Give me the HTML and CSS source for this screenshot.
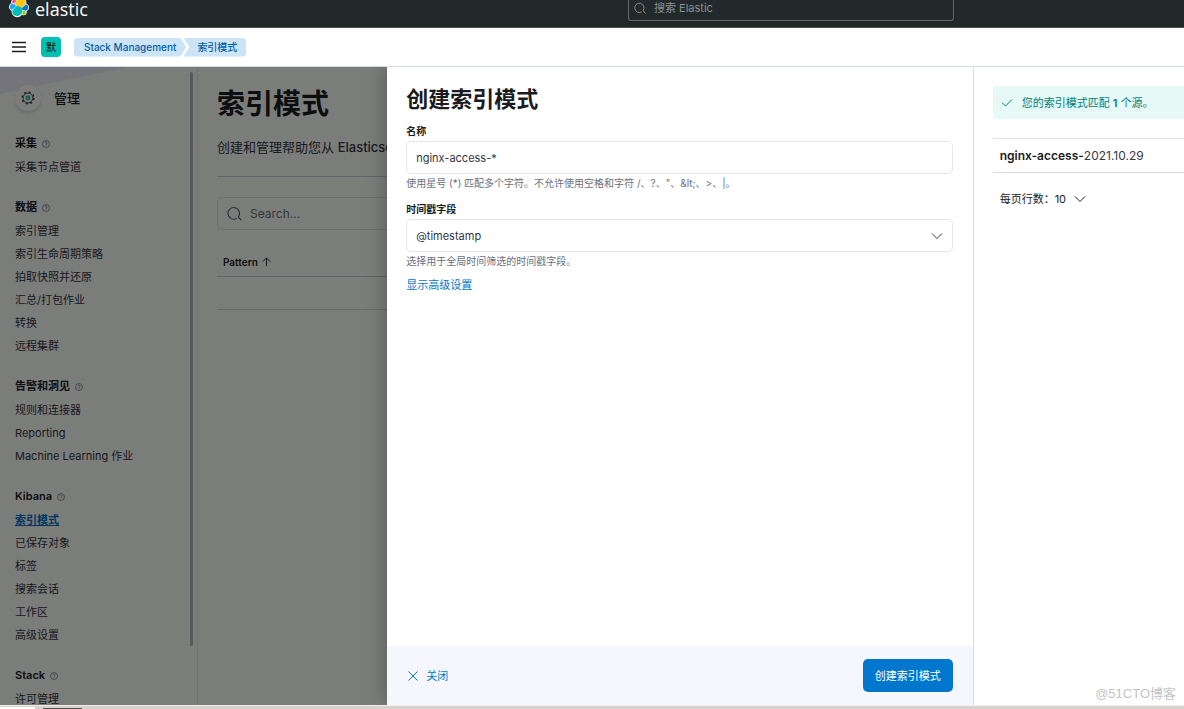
FILE: index.html
```html
<!DOCTYPE html>
<html lang="zh-CN">
<head>
<meta charset="utf-8">
<title>索引模式 - Elastic</title>
<link rel="stylesheet" href="styles.css">
</head>
<body>
<svg class="defs" aria-hidden="true">
  <symbol id="help" viewBox="0 0 16 16"><circle cx="8" cy="8" r="7" fill="none" stroke="currentColor" stroke-width="1.4"/><path d="M5.8 6.3c0-3 4.4-2.9 4.4-.2 0 1.700-2.200 1.600-2.200 3.400M8 11v1.500" fill="none" stroke="currentColor" stroke-width="1.400"/></symbol>
  <symbol id="search" viewBox="0 0 16 16"><path d="M10.300 13.200A6.200 6.200 0 1 1 12.100 11.600L15.300 15.300" fill="none" stroke="currentColor" stroke-width="1.100"/></symbol>
  <symbol id="chevron" viewBox="0 0 12 12"><path d="M1 3.500 6 8.500 11 3.500" fill="none" stroke="currentColor"/></symbol>
</svg>
<header class="topbar">
  <a class="brand" href="#">
    <svg class="brand-logo" viewBox="0 6 32 26">
      <path fill="#fff" d="M32 16.800c0-2.700-1.700-5-4.200-6C28.700 5.200 24.500 0 18.800 0 15.800 0 13 1.400 11.300 3.800 7 1 2 5 3.900 9.800 1.500 10.700 0 13 0 15.600c0 2.700 1.700 5.100 4.200 6C3.300 27 7.500 32 13.200 32c3 0 5.800-1.500 7.500-3.900 4.300 2.900 9-1 7.400-5.900 2.400-.8 3.900-3 3.900-5.400"/>
      <path fill="#FEC514" d="m12.600 13.800 7 3.200 7.100-6.200A8 8 0 0 0 11.600 6.300l-1.200 6.100z"/>
      <path fill="#02BCB7" d="M5.300 21.200a8 8 0 0 0 15.100 4.600l1.200-6.100-1.600-3-7-3.200z"/>
      <path fill="#F04E98" d="m5.200 9.100 4.800 1.100 1.100-5.500C8.100 2.500 3.800 5.600 5.200 9.100"/>
      <path fill="#1BA9F5" d="M4.800 10.300a5.600 5.600 0 0 0-.3 10.300l6.700-6.100-1.200-2.600z"/>
      <path fill="#93C90E" d="M20.900 27.300c3.200 2.300 7.300-.8 5.900-4.400L22 21.800z"/>
      <path fill="#07C" d="m21.900 20.500 5.300 1.300a5.600 5.600 0 0 0 .3-10.300l-6.900 6z"/>
    </svg>
    <span class="brand-name">elastic</span>
  </a>
  <label class="global-search">
    <svg class="icon-12"><use href="#search"/></svg>
    <input type="search" placeholder="搜索 Elastic" aria-label="搜索 Elastic">
  </label>
</header>
<nav class="subbar" aria-label="导航路径">
  <button class="menu" aria-label="菜单"><svg class="menu-icon" viewBox="0 0 14 12"><path d="M0 1.500h14M0 6h14M0 10.500h14" stroke="#1a1c21" stroke-width="1.500"/></svg></button>
  <button class="space">默</button>
  <div class="crumbs"><a class="crumb crumb-first" href="#">Stack Management</a><a class="crumb crumb-last" href="#">索引模式</a></div>
</nav>
<div class="workspace">
  <aside class="sidebar">
    <div class="sidebar-title">
      <span class="gear"><svg class="gear-icon" viewBox="0 0 20 20" fill="none"><circle cx="10" cy="10" r="7" stroke="#343741" stroke-width="1.300"/><circle cx="10" cy="10" r="8.400" stroke="#343741" stroke-width="2" stroke-dasharray="3 3.600"/><circle cx="10" cy="10" r="2.800" stroke="#00a69b" stroke-width="1.500"/><path d="M10 8v4M8 10h4" stroke="#00a69b"/></svg></span>
      <h2>管理</h2>
    </div>
    <section><h3>采集 <svg class="help"><use href="#help"/></svg></h3><ul><li><a href="#">采集节点管道</a></li></ul></section>
    <section><h3>数据 <svg class="help"><use href="#help"/></svg></h3><ul><li><a href="#">索引管理</a></li><li><a href="#">索引生命周期策略</a></li><li><a href="#">拍取快照并还原</a></li><li><a href="#">汇总/打包作业</a></li><li><a href="#">转换</a></li><li><a href="#">远程集群</a></li></ul></section>
    <section><h3>告警和洞见 <svg class="help"><use href="#help"/></svg></h3><ul><li><a href="#">规则和连接器</a></li><li><a href="#">Reporting</a></li><li><a href="#">Machine Learning 作业</a></li></ul></section>
    <section><h3>Kibana <svg class="help"><use href="#help"/></svg></h3><ul><li><a class="current" href="#">索引模式</a></li><li><a href="#">已保存对象</a></li><li><a href="#">标签</a></li><li><a href="#">搜索会话</a></li><li><a href="#">工作区</a></li><li><a href="#">高级设置</a></li></ul></section>
    <section><h3>Stack <svg class="help"><use href="#help"/></svg></h3><ul><li><a href="#">许可管理</a></li></ul></section>
    <span class="scroll-thumb"></span>
  </aside>
  <main class="content">
    <h1>索引模式</h1>
    <p class="intro">创建和管理帮助您从 <b>Elasticsearch</b> 中检索数据的索引模式。</p>
    <label class="table-search"><svg class="icon-14"><use href="#search"/></svg><input type="search" placeholder="Search..." aria-label="Search"></label>
    <table class="patterns">
      <thead><tr><th>Pattern <svg class="sort" viewBox="0 0 10 10"><path d="M5 10V1M1 5l4-4 4 4" fill="none" stroke="currentColor"/></svg></th></tr></thead>
      <tbody><tr><td></td></tr></tbody>
    </table>
  </main>
  <div class="mask"></div>
  <div class="flyout" role="dialog" aria-labelledby="flyout-title">
    <form class="editor">
      <div class="editor-body">
        <h2 id="flyout-title">创建索引模式</h2>
        <div class="field">
          <label for="name">名称</label>
          <input id="name" class="control" type="text" value="nginx-access-*">
          <p class="hint">使用星号 (*) 匹配多个字符。不允许使用空格和字符 /、?、"、&amp;lt;、&gt;、|。</p>
        </div>
        <div class="field">
          <label for="time">时间戳字段</label>
          <div class="select-wrap">
            <select id="time" class="control"><option>@timestamp</option></select>
            <svg class="select-arrow"><use href="#chevron"/></svg>
          </div>
          <p class="hint">选择用于全局时间筛选的时间戳字段。</p>
        </div>
        <button type="button" class="link">显示高级设置</button>
      </div>
      <footer class="editor-footer">
        <button type="button" class="close"><svg class="close-icon" viewBox="0 0 10 10"><path d="m.5.5 9 9M9.500.5l-9 9" stroke="currentColor"/></svg>关闭</button>
        <button type="submit" class="primary">创建索引模式</button>
      </footer>
    </form>
    <section class="preview">
      <p class="callout"><svg class="check" viewBox="0 0 12 12"><path d="M1 5.500 4.500 9 11 2.500" fill="none" stroke="currentColor"/></svg><span>您的索引模式匹配 <b>1</b> 个源。</span></p>
      <table class="matches"><tbody><tr><td><b>nginx-access-</b>2021.10.29</td></tr></tbody></table>
      <button type="button" class="rows">每页行数：10 <svg class="rows-arrow"><use href="#chevron"/></svg></button>
    </section>
    <span class="watermark">@51CTO博客</span>
  </div>
</div>
<div class="taskbar"><span class="task-light"></span><span class="task-dark"></span></div>
</body>
</html>
```
FILE: styles.css
```css
* { box-sizing: border-box; }
body {
  margin: 0;
  height: 100vh;
  display: flex;
  flex-direction: column;
  overflow: hidden;
  font: 12px/18px Inter, "Noto Sans CJK SC", sans-serif;
  color: #1a1c21;
  background: #fff;
}
h1, h2, h3, p, ul { margin: 0; padding: 0; }
ul { list-style: none; }
a { color: inherit; text-decoration: none; }
button, input, select { font: inherit; color: inherit; border: 0; background: none; padding: 0; margin: 0; outline: 0; }
svg { flex: none; }
.defs { display: none; }

.topbar {
  flex: none;
  position: relative;
  height: 28px;
  display: flex;
  justify-content: center;
  align-items: flex-start;
  background: #22292b;
  border-bottom: 1px solid #4a5153;
}
.brand { position: absolute; left: 9px; top: 0; display: flex; align-items: flex-start; gap: 6px; color: #fff; }
.brand-logo { width: 20px; height: 18px; }
.brand-name { font: 18px/18px "Open Sans", sans-serif; }
.global-search {
  width: 326px;
  height: 21px;
  margin-left: 398px;
  padding: 0 5px 4px;
  display: flex;
  align-items: center;
  gap: 8px;
  color: #9a9d9f;
  border: 1px solid #62676a;
  border-top: 0;
  border-radius: 0 0 3px 3px;
}
.global-search input { flex: 1; min-width: 0; font-size: 11px; line-height: 16px; }
.global-search input::placeholder { color: #8b8f91; }
.icon-12 { width: 12px; height: 12px; }
.icon-14 { width: 15px; height: 15px; }

.subbar {
  flex: none;
  height: 39px;
  padding: 0 12px;
  display: flex;
  align-items: center;
  border-bottom: 1px solid #d3dae6;
}
.menu { display: flex; }
.menu-icon { width: 14px; height: 12px; }
.space { width: 20px; height: 20px; margin: 0 13px 0 15px; border-radius: 4px; background: #00bfb3; font-size: 10px; line-height: 20px; font-weight: 500; }
.crumbs { display: flex; font-size: 10px; line-height: 19px; font-weight: 500; color: #0061a6; }
.crumb { background: #cce4f5; }
.crumb-first { padding: 0 10px; border-radius: 4px 0 0 4px; clip-path: polygon(0 0, calc(100% - 6px) 0, 100% 50%, calc(100% - 6px) 100%, 0 100%); }
.crumb-last { margin-left: -3px; padding: 0 9px 0 14px; border-radius: 0 4px 4px 0; clip-path: polygon(0 0, 100% 0, 100% 100%, 0 100%, 6px 50%); }

.workspace { position: relative; flex: 1; min-height: 0; display: flex; overflow: hidden; background: #f7faf5; }
.sidebar {
  position: relative;
  flex: none;
  width: 198px;
  padding: 17px 15px 0;
  border-right: 1px solid #e4e2ec;
  background: linear-gradient(168deg, #e9e9f4 26px, transparent 27px);
}
.sidebar-title { display: flex; align-items: center; gap: 13px; height: 28px; margin-bottom: 19px; }
.sidebar-title h2 { font-size: 13px; font-weight: 500; }
.gear { width: 26px; height: 26px; display: grid; place-items: center; border-radius: 50%; background: #fbfdf9; box-shadow: 0 2px 3px #98a2b366; }
.gear-icon { width: 14px; height: 14px; }
.sidebar section { margin-bottom: 16px; }
.sidebar h3 { height: 25px; font-size: 11px; line-height: 25px; font-weight: 600; display: flex; align-items: center; gap: 5px; }
.help { width: 8px; height: 8px; color: #69707d; }
.sidebar li { height: 23px; font-size: 11px; line-height: 23px; color: #343741; }
.sidebar .current { color: #0071c2; font-weight: 600; text-decoration: underline; }
.scroll-thumb { position: absolute; top: 5px; right: 4px; width: 3px; height: 90%; border-radius: 2px; background: #a9b2b9; }

.content { flex: 1; min-width: 0; padding: 20px 20px 0 19px; }
.content h1 { font-size: 28px; line-height: 34px; font-weight: 700; }
.intro { margin-top: 16px; padding-bottom: 19px; font-size: 13px; line-height: 20px; color: #343741; border-bottom: 1px solid #c5cad3; white-space: nowrap; }
.intro b { font-weight: 500; }
.table-search { height: 33px; margin-top: 20px; padding: 0 9px; display: flex; align-items: center; gap: 8px; border: 1px solid #dddfe9; border-radius: 5px; color: #535966; }
.table-search input { flex: 1; }
.table-search input::placeholder { color: #69707d; }
.patterns { width: 100%; margin-top: 19px; border-collapse: collapse; }
.patterns th { height: 27px; padding: 0 6px; text-align: left; font-size: 10px; font-weight: 600; border-bottom: 1px solid #c5cad3; }
.patterns td { height: 33px; border-bottom: 1px solid #d3d6df; }
.sort { width: 9px; height: 9px; margin-left: 2px; }
.mask { position: absolute; inset: 0; background: rgba(0, 0, 0, .5); }

.flyout {
  position: absolute;
  top: 0;
  right: 0;
  bottom: 0;
  width: 67.3%;
  display: flex;
  background: #fff;
  box-shadow: 0 0 20px rgba(0, 0, 0, .3);
}
.editor { flex: 1; display: flex; flex-direction: column; border-right: 1px solid #d9dbe8; }
.editor-body { flex: 1; padding: 17px 20px 0 19px; }
.editor-body h2 { font-size: 22px; line-height: 30px; font-weight: 700; }
.field { margin-top: 9px; display: flex; flex-direction: column; }
.field label { font-size: 10px; line-height: 16px; font-weight: 600; margin-bottom: 2px; }
.field + .field { margin-top: 11px; }
.control { width: 100%; height: 33px; padding: 0 9px; border: 1px solid #e6e6f2; border-radius: 5px; font-size: 11px; color: #343741; background: #fff; appearance: none; }
.select-wrap { position: relative; }
.select-arrow { position: absolute; right: 10px; top: 11px; width: 12px; height: 12px; color: #343741; pointer-events: none; }
.hint { margin-top: 2px; font-size: 10px; line-height: 14px; color: #69707d; }
.link { margin-top: 8px; font-size: 11px; line-height: 18px; color: #0077cc; }
.editor-footer { height: 59px; padding: 0 20px 0 19px; display: flex; align-items: center; justify-content: space-between; background: #f6f7fe; }
.close { display: flex; align-items: center; gap: 8px; padding-left: 2px; font-size: 11px; color: #0077cc; }
.close-icon { width: 10px; height: 10px; }
.primary { height: 33px; padding: 0 12px; border-radius: 5px; background: #0077cc; color: #fff; font-size: 11px; }

.preview { flex: none; width: 26.4%; padding: 19px 0 0 19px; }
.callout { height: 33px; padding: 0 8px; display: flex; align-items: center; gap: 9px; font-size: 11px; color: #007e77; background: #e6f9f7; white-space: nowrap; }
.callout b { font-weight: 600; }
.check { width: 12px; height: 12px; }
.matches { width: 100%; margin-top: 19px; border-collapse: collapse; }
.matches td { height: 34px; padding: 0 7px; color: #343741; border-top: 1px solid #dfe2ec; border-bottom: 1px solid #d3dae6; }
.matches b { font-weight: 600; color: #1a1c21; }
.rows { margin: 17px 7px 0; display: flex; align-items: center; gap: 8px; font-size: 11px; color: #1a1c21; }
.rows-arrow { width: 12px; height: 12px; }
.watermark { position: absolute; right: 8px; bottom: 2px; font: 13px/18px "Liberation Sans", "Noto Sans CJK SC", sans-serif; color: #c4c4c4; }

.taskbar { flex: none; height: 4px; display: flex; align-items: flex-end; background: #d5d3cc; border-top: 1px solid #efeeea; }
.task-light { width: 35px; height: 2px; background: #fff; }
.task-dark { width: 39px; height: 1px; margin-left: 8px; background: #555; }
```
